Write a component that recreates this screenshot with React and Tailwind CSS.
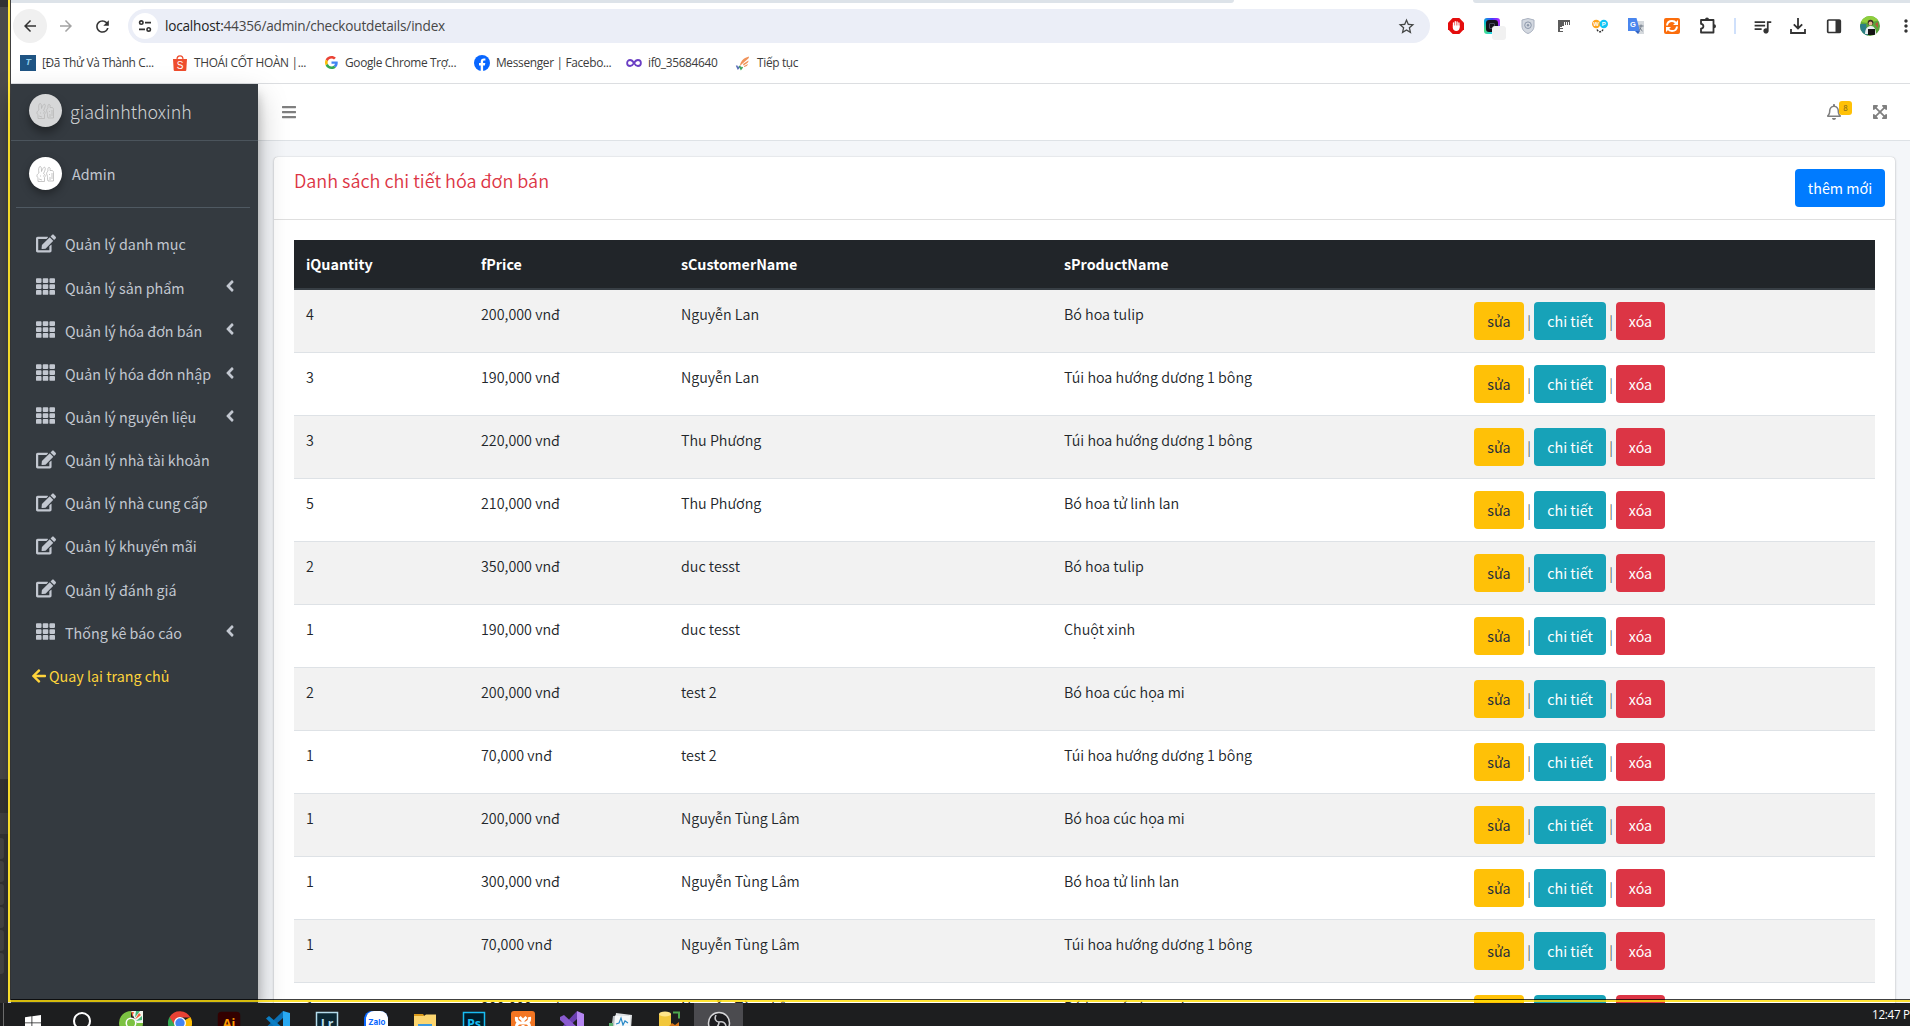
import {
  FaTh, FaAngleLeft, FaArrowLeft, FaBars, FaRegBell, FaExpandArrowsAlt, FaEdit,
} from 'react-icons/fa';
import {
  MdArrowBack, MdArrowForward, MdRefresh, MdStarBorder, MdQueueMusic, MdMoreVert,
} from 'react-icons/md';

const bookmarks = [
  { w: 'w-[152px]', label: '[Đã Thử Và Thành C...', icon: 'T' },
  { w: 'w-[151px]', label: 'THOÁI CỐT HOÀN |...', icon: 'S' },
  { w: 'w-[151px]', label: 'Google Chrome Trợ...', icon: 'G' },
  { w: 'w-[152px]', label: 'Messenger | Facebo...', icon: 'F' },
  { w: 'w-[109px]', label: 'if0_35684640', icon: 'I' },
  { w: 'w-[90px]', label: 'Tiếp tục', icon: 'W' },
];

const menu = [
  ['Quản lý danh mục', false],
  ['Quản lý sản phẩm', true],
  ['Quản lý hóa đơn bán', true],
  ['Quản lý hóa đơn nhập', true],
  ['Quản lý nguyên liệu', true],
  ['Quản lý nhà tài khoản', false],
  ['Quản lý nhà cung cấp', false],
  ['Quản lý khuyến mãi', false],
  ['Quản lý đánh giá', false],
  ['Thống kê báo cáo', true],
];

const rows = [
  ['4', '200,000 vnđ', 'Nguyễn Lan', 'Bó hoa tulip'],
  ['3', '190,000 vnđ', 'Nguyễn Lan', 'Túi hoa hướng dương 1 bông'],
  ['3', '220,000 vnđ', 'Thu Phương', 'Túi hoa hướng dương 1 bông'],
  ['5', '210,000 vnđ', 'Thu Phương', 'Bó hoa tử linh lan'],
  ['2', '350,000 vnđ', 'duc tesst', 'Bó hoa tulip'],
  ['1', '190,000 vnđ', 'duc tesst', 'Chuột xinh'],
  ['2', '200,000 vnđ', 'test 2', 'Bó hoa cúc họa mi'],
  ['1', '70,000 vnđ', 'test 2', 'Túi hoa hướng dương 1 bông'],
  ['1', '200,000 vnđ', 'Nguyễn Tùng Lâm', 'Bó hoa cúc họa mi'],
  ['1', '300,000 vnđ', 'Nguyễn Tùng Lâm', 'Bó hoa tử linh lan'],
  ['1', '70,000 vnđ', 'Nguyễn Tùng Lâm', 'Túi hoa hướng dương 1 bông'],
  ['1', '200,000 vnđ', 'Nguyễn Tùng Lâm', 'Bó hoa cúc họa mi'],
];

function GoogleG() {
  return (
    <svg viewBox="0 0 48 48" className="ml-[2px] mr-[1px] size-[13px]">
      <path fill="#EA4335" d="M24 9.5c3.5 0 6.7 1.2 9.2 3.6l6.9-6.9C35.9 2.4 30.5 0 24 0 14.6 0 6.5 5.4 2.6 13.2l8 6.2C12.4 13.7 17.7 9.5 24 9.5z" />
      <path fill="#4285F4" d="M47 24.6c0-1.6-.2-3.1-.4-4.6H24v9h12.9c-.6 3-2.3 5.5-4.8 7.2l7.7 6C44.4 38 47 32 47 24.6z" />
      <path fill="#FBBC05" d="M10.500 28.600c-.5-1.500-.8-3-.8-4.600s.3-3.100.8-4.600l-8-6.200C.9 16.500 0 20.100 0 24s.9 7.500 2.600 10.800z" />
      <path fill="#34A853" d="M24 48c6.500 0 11.900-2.100 15.900-5.800l-7.700-6c-2.200 1.500-4.900 2.300-8.200 2.300-6.300 0-11.600-4.200-13.500-9.900l-8 6.200C6.500 42.600 14.600 48 24 48z" />
    </svg>
  );
}

function BookmarkIcon({ kind }) {
  if (kind === 'T')
    return (
      <span className="flex size-4 items-center justify-center bg-[#1f5483] font-['Liberation_Sans'] text-[9px] font-bold italic text-[#8fd0ee]">T</span>
    );
  if (kind === 'S')
    return (
      <svg viewBox="0 0 16 16" className="size-4">
        <path d="M5 4.500a3 3.600 0 0 1 6 0" fill="none" stroke="#ee4d2d" strokeWidth="1.200" />
        <path d="M1 4h14l-.7 11a1 1 0 0 1-1 1H2.700a1 1 0 0 1-1-1z" fill="#ee4d2d" />
        <text x="8" y="13.500" textAnchor="middle" fontSize="10" fontFamily="Liberation Sans" fill="#fff">S</text>
      </svg>
    );
  if (kind === 'G') return <GoogleG />;
  if (kind === 'F')
    return (
      <svg viewBox="0 0 16 16" className="size-4">
        <circle cx="8" cy="8" r="8" fill="#0866ff" />
        <path d="M6.700 16v-5.500H5V8.100h1.700V7c0-2.500 1.100-3.600 3.300-3.600.5 0 1 .1 1.400.2v2c-.3 0-.6-.1-1-.1-1 0-1.300.5-1.300 1.400v1.200h2.200l-.4 2.400H9.100V16z" fill="#fff" />
      </svg>
    );
  if (kind === 'I')
    return (
      <svg viewBox="0 0 16 16" className="size-4">
        <path d="M8 8C6.700 5.800 5.600 5 4.100 5a3 3 0 0 0 0 6C5.600 11 6.700 10.200 8 8s2.400-3 3.900-3a3 3 0 0 1 0 6C10.400 11 9.300 10.200 8 8z" fill="none" stroke="#6b3fc4" strokeWidth="1.800" />
      </svg>
    );
  return (
    <svg viewBox="0 0 16 16" className="size-4">
      <path d="M5 11C5 7 8 3 14 1.500c0 1.500-.7 2.300-1.500 2.700L7 9zM8 9l5.500-3.500c0 1.500-.7 2.300-1.500 2.700L8.500 10.500zM9 11l4-2c-.3 1.500-1.500 2.500-4 3z" fill="#f0935a" />
      <path d="M1.500 10.500l1.500 3 2-2.500" fill="none" stroke="#5b6fb8" strokeWidth="1.600" />
      <path d="M4.500 11l1.500 3 1.500-2" fill="none" stroke="#3ea45b" strokeWidth="1.600" />
    </svg>
  );
}

function Slot({ children }) {
  return <span className="relative flex h-[34px] w-[36px] shrink-0 items-center justify-center">{children}</span>;
}

function Toolbar() {
  return (
    <div className="flex h-[46px] items-center pt-[6px] text-[#454746]">
      <span className="ml-[2px] flex size-[34px] shrink-0 items-center justify-center rounded-full bg-[#f0f0f0]">
        <MdArrowBack className="size-[18px] text-[#333]" />
      </span>
      <span className="flex w-[37px] shrink-0 justify-center"><MdArrowForward className="size-[18px] text-[#a3a3a3]" /></span>
      <span className="flex w-[37px] shrink-0 justify-center"><MdRefresh className="size-[19px] text-[#333]" /></span>
      <div className="ml-[7px] flex h-[34px] w-[1302px] shrink-0 items-center rounded-full bg-[#ebeef7] pl-[4px] pr-[14px]">
        <span className="flex size-[26px] items-center justify-center rounded-full bg-white">
          <svg viewBox="0 0 14 14" className="size-[14px]" fill="none" stroke="#333" strokeWidth="1.600">
            <circle cx="3.300" cy="3.600" r="1.700" /><path d="M7 3.600h6M1 10.400h6" /><circle cx="10.700" cy="10.400" r="1.700" />
          </svg>
        </span>
        <span className="ml-[7px] mt-px flex-1 font-['Open_Sans',sans-serif] text-[13.600px] tracking-[-0.200px] text-[#474747]">
          <span className="text-[#1f1f1f]">localhost:</span>44356/admin/checkoutdetails/index
        </span>
        <MdStarBorder className="size-[19px]" />
      </div>
      <div className="ml-[8px] flex shrink-0 items-center">
        <Slot>
          <svg viewBox="0 0 16 16" className="size-4">
            <path d="M4.700 0h6.600L16 4.700v6.600L11.300 16H4.700L0 11.300V4.700z" fill="#e40d0d" />
            <path d="M5.500 8V4.800M7.300 8V3.600M9.100 8V3.800M10.900 9V5" stroke="#fff" strokeWidth="1.300" strokeLinecap="round" />
            <path d="M4.800 7.500h6.800V9.500c0 2-1.200 3.500-3.300 3.500S4.800 11.500 4.800 9.500z" fill="#fff" />
          </svg>
        </Slot>
        <Slot>
          <span className="flex size-4 items-center justify-center rounded-[3px] bg-[conic-gradient(from_0deg,#4338ff,#c026ff,#2563eb,#22d3ee,#4ade80,#06b6d4,#4338ff)]">
            <span className="flex size-[12px] items-center justify-center rounded-[3px] bg-[#14121c]"><span className="size-[6px] rounded-[1px] border border-[#4a4a60]" /></span>
          </span>
          <span className="absolute left-[18px] top-[17px] size-[14px] rounded-[3px] bg-[#f1f1f1]" />
        </Slot>
        <Slot>
          <svg viewBox="0 0 16 16" className="size-4">
            <path d="M8 .5l6 1.500v6c0 4-3 6.500-6 7.500-3-1-6-3.500-6-7.500V2z" fill="#d3d8e0" stroke="#a9b1bf" />
            <circle cx="8" cy="7.200" r="3.300" fill="none" stroke="#8d98ab" /><circle cx="8" cy="7.200" r="1.200" fill="#8d98ab" />
          </svg>
        </Slot>
        <Slot>
          <svg viewBox="0 0 16 16" className="size-4">
            <path d="M2 2h12v5h-1V4h-1v3h-1V4h-1v3H9V4H8v4H6v1H4v1h3v1H4v2h3v1H2z" fill="#5c5c5c" />
          </svg>
        </Slot>
        <Slot>
          <svg viewBox="0 0 16 16" className="size-4">
            <circle cx="4.200" cy="6" r="4.200" fill="#ffa51e" /><circle cx="11.800" cy="6" r="4.200" fill="#11c5f5" />
            <path d="M5 11.500c1.500 3 4.500 3 6 0" fill="none" stroke="#333" strokeWidth="1.500" strokeDasharray="2 1" />
            <text x="4.200" y="8.300" textAnchor="middle" fontSize="6" fontWeight="bold" fontFamily="Liberation Sans" fill="#fff">W</text>
            <text x="11.800" y="8.300" textAnchor="middle" fontSize="6" fontWeight="bold" fontFamily="Liberation Sans" fill="#fff">P</text>
          </svg>
        </Slot>
        <Slot>
          <svg viewBox="0 0 16 16" className="size-4">
            <path d="M7 3h9v13H10z" fill="#d5d9dd" />
            <path d="M0 0h8.500L12 13H0z" fill="#4a86ee" /><path d="M7 13h5l-2 3z" fill="#2f62c5" />
            <path d="M10.500 8h5M13 6.500V8c0 2-1 4-2.500 5M11.500 9.500c.8 1.500 1.700 2.600 3 3.500" stroke="#717b88" fill="none" />
            <text x="4.800" y="9" textAnchor="middle" fontSize="7.500" fontWeight="bold" fontFamily="Liberation Sans" fill="#fff">G</text>
          </svg>
        </Slot>
        <Slot>
          <svg viewBox="0 0 16 16" className="size-4">
            <rect width="16" height="16" rx="2" fill="#fb6d0c" />
            <path d="M3 7.500C3.300 4.500 5.500 3 8 3c1.800 0 3.200.8 4 2M13 8.500c-.3 3-2.500 4.500-5 4.500-1.800 0-3.200-.8-4-2" fill="none" stroke="#fff" strokeWidth="2" />
            <path d="M14 2v5H9zM2 14V9h5z" fill="#fff" />
          </svg>
        </Slot>
        <Slot>
          <svg viewBox="0 0 18 18" className="size-[18px]">
            <path d="M2 3h12.500v12.500H2v-3.800c3.200-.3 3.200-4.600 0-4.900z" fill="none" stroke="#333" strokeWidth="1.800" strokeLinejoin="round" />
            <path d="M6 2.500a2 2 0 0 1 4 0zM15 7.200a2 2 0 0 1 0 4z" fill="#333" />
          </svg>
        </Slot>
        <span className="mx-[8px] h-4 w-[2px] bg-[#cfe0fb]" />
        <Slot><MdQueueMusic className="size-[21px] text-[#333]" /></Slot>
        <Slot>
          <svg viewBox="0 0 16 16" className="size-4" fill="none" stroke="#333" strokeWidth="1.800"><path d="M8 0v10M3.800 6.300L8 10.500l4.200-4.200M1 11v4h14v-4" /></svg>
        </Slot>
        <Slot>
          <svg viewBox="0 0 16 16" className="size-4"><rect x="1.700" y="2" width="12.600" height="12.500" rx="1" fill="none" stroke="#333" strokeWidth="1.700" /><path d="M9.500 2H14v12.500H9.500z" fill="#333" /></svg>
        </Slot>
        <Slot>
          <svg viewBox="0 0 20 20" className="size-5">
            <clipPath id="av"><circle cx="10" cy="10" r="10" /></clipPath>
            <g clipPath="url(#av)">
              <rect width="20" height="20" fill="#5aa53a" /><path d="M0 0h20v4L8 7 0 6z" fill="#8fcf3c" /><path d="M0 8h6l2 12H0z" fill="#2b7f86" />
              <circle cx="10.500" cy="6.500" r="2.800" fill="#3a2a22" /><circle cx="10.500" cy="7.500" r="1.900" fill="#e6b58e" /><path d="M5 18c0-6 3-8 6-8s5 3 5 8z" fill="#e8edf0" /><path d="M8 13h7v6H8z" fill="#141414" /><path d="M15 8l3-2v6z" fill="#b35a3a" />
            </g>
          </svg>
        </Slot>
        <Slot><MdMoreVert className="size-[20px] text-[#333]" /></Slot>
      </div>
    </div>
  );
}

function Bunnies({ bg }) {
  return (
    <svg viewBox="0 0 33 33" className={bg}>
      <g fill="none" stroke="#b9b9b9" strokeWidth=".8">
        <path d="M10 16c-1-4 0-7 1.500-6.500 1 .5 1 3 1 5 1-3 2.500-5 3.500-4s-.5 4-1.500 6c2 1 2 3 1 4v4H9v-4c-2-1-1-3.500 1-4.500zM11 19h1M14 19h1M10 22l3 1" />
        <path d="M19 14c-.5-3 .5-4 1.500-3.500s.5 2 .5 3h2c1 0 1.500 1 1.500 2v8.500H19c-1-3 0-4-1-6s0-3 1-4zM20 17l1 1M21 20v3M23 16v6" />
      </g>
    </svg>
  );
}

function Sidebar() {
  return (
    <aside className="relative z-10 flex h-full w-[247px] shrink-0 flex-col bg-[#343a40] text-[14.300px] text-[#c2c7d0] shadow-[0_14px_28px_rgba(0,0,0,0.25),0_10px_10px_rgba(0,0,0,0.22)]">
      <div className="flex h-[57px] items-start border-b border-[#4b545c] pl-[18px] pt-[10px]">
        <Bunnies bg="size-[33px] shrink-0 rounded-full bg-[#d6d7d8] shadow-[0_6px_10px_rgba(0,0,0,0.35)]" />
        <span className="ml-[8px] mt-[2px] text-[17.900px] font-light leading-[30px] text-[#d0d2d4]">giadinhthoxinh</span>
      </div>
      <div className="ml-[5px] mr-[8px] flex h-[67px] items-start border-b border-[#4f5962] pl-[13px] pt-[16px]">
        <Bunnies bg="size-[33px] shrink-0 rounded-full bg-white shadow-[0_4px_8px_rgba(0,0,0,0.35)]" />
        <span className="ml-[10px] mt-[5px] leading-6">Admin</span>
      </div>
      <nav className="flex flex-col pt-[14px]">
        {menu.map(([label, group]) => (
          <div key={label} className="flex h-[43.170px] items-center pl-[25px]">
            {group ? <FaTh className="-mt-px size-[19px]" /> : <FaEdit className="h-[19px] w-[20px]" />}
            <span className={group ? 'ml-[10px] mt-px flex-1' : 'ml-[9px] mt-px flex-1'}>{label}</span>
            {group && <FaAngleLeft className="-mt-px mr-[19px] size-[18px]" />}
          </div>
        ))}
        <div className="flex h-[45px] items-center pl-[20px] text-[#ffd43b]">
          <FaArrowLeft className="size-[16px]" />
          <span className="ml-[2px]">Quay lại trang chủ</span>
        </div>
      </nav>
    </aside>
  );
}

const grid = 'grid grid-cols-[175px_200px_383px_411px_412px]';

function OrderTable() {
  return (
    <div className="mx-[20px] mt-[20px] text-[14.300px] leading-6 text-[#212529]">
      <div className={`${grid} h-[50px] border-b-2 border-[#383f45] bg-[#212529] pt-[12px] font-bold text-white`}>
        {['iQuantity', 'fPrice', 'sCustomerName', 'sProductName'].map((h) => (
          <span key={h} className="pl-3">{h}</span>
        ))}
      </div>
      {rows.map((r, i) => (
        <div key={i} className={`${grid} h-[63px] border-b border-[#dee2e6] pt-3 ${i % 2 ? 'bg-white' : 'bg-[#f2f2f2]'}`}>
          {r.map((c, j) => (
            <span key={j} className="pl-3 font-[350]">{c}</span>
          ))}
          <div className="flex h-[38px] items-center pl-[11px]">
            <span className="flex h-[38px] w-[50px] items-center justify-center rounded bg-[#ffc107] text-[#1f2d3d]">sửa</span>
            <span className="w-[10px] text-center font-light">|</span>
            <span className="flex h-[38px] w-[72px] items-center justify-center rounded bg-[#17a2b8] text-white">chi tiết</span>
            <span className="w-[10px] text-center font-light">|</span>
            <span className="flex h-[38px] w-[49px] items-center justify-center rounded bg-[#dc3545] text-white">xóa</span>
          </div>
        </div>
      ))}
    </div>
  );
}

function SquareApp({ bg, fg, line, label }) {
  return (
    <svg viewBox="0 0 24 24" className="size-6">
      <rect x="1.500" y="1.500" width="21" height="21" rx={line ? 0 : 3} fill={bg} stroke={line || bg} strokeWidth="1.500" />
      <text x="12" y="16.500" textAnchor="middle" fontSize="12.500" fontWeight="bold" fontFamily="Open Sans" fill={fg}>{label}</text>
    </svg>
  );
}

function Taskbar() {
  const icons = [
    <svg key="win" viewBox="0 0 24 24" className="size-6"><path d="M4 6.200l6.500-.9v6.200H4zM11.300 5.200L20 4v7.500h-8.700zM4 12.300h6.500v6.200L4 17.600zM11.300 12.300H20V20l-8.700-1.300z" fill="#fff" /></svg>,
    <svg key="o" viewBox="0 0 24 24" className="size-6"><circle cx="12" cy="10" r="8" fill="none" stroke="#fff" strokeWidth="2" /></svg>,
    <svg key="cc" viewBox="0 0 24 24" className="size-6">
      <path d="M12 0h12v12l-6 1z" fill="#f3f6ee" /><path d="M12 0A12 12 0 1 0 24 12l-7 0a5 5 0 1 1-5-5z" fill="#7cc242" />
      <circle cx="12" cy="12" r="5.500" fill="#fff" /><circle cx="12" cy="12" r="4" fill="#7cc242" />
      <path d="M12.500 1h2.500l-1.800 5zM20 2l2 2-6 4.500z" fill="#f06338" /><path d="M17 0h4l-5 6.500zM23 5v4l-6 1z" fill="#49b57a" />
    </svg>,
    <svg key="chrome" viewBox="0 0 24 24" className="size-6">
      <path d="M12 12L22.400 6A12 12 0 0 1 12 24z" fill="#fbbc05" /><path d="M12 12v12A12 12 0 0 1 1.600 6z" fill="#34a853" />
      <path d="M12 6.500h10.500A12 12 0 0 0 1.600 6l5 8z" fill="#e94235" /><circle cx="12" cy="12" r="6" fill="#fff" /><circle cx="12" cy="12" r="4.700" fill="#4285f4" />
    </svg>,
    <SquareApp key="ai" bg="#330000" fg="#ff9a00" label="Ai" />,
    <svg key="code" viewBox="0 0 24 24" className="size-6"><path d="M17 0v7L3.500 19 0 16.500z" fill="#0b6fb3" /><path d="M3 5L0 7.500 17 24v-7z" fill="#0b7ec4" /><path d="M17 0l7 2v20l-7 2z" fill="#29a9f2" /></svg>,
    <SquareApp key="lr" bg="#0b2733" fg="#b4dcec" line="#b4dcec" label="Lr" />,
    <svg key="zalo" viewBox="0 0 24 24" className="size-6"><rect width="24" height="24" rx="8" fill="#0a68ff" /><rect x="2" width="22" height="24" rx="8" fill="#fff" /><text x="12.800" y="14" textAnchor="middle" fontSize="8" fontWeight="bold" fontFamily="Inter" fill="#0a68ff">Zalo</text></svg>,
    <svg key="folder" viewBox="0 0 24 24" className="size-6"><path d="M1 3h9l1.500 2H1z" fill="#d99a1c" /><path d="M1 5h10l2-1.500h10V22H1z" fill="#fcd670" /><path d="M5 13h14v9H5z" fill="#3b9ae1" /></svg>,
    <SquareApp key="ps" bg="#001d2b" fg="#19bdf2" line="#19bdf2" label="Ps" />,
    <svg key="xampp" viewBox="0 0 24 24" className="size-6"><rect width="24" height="24" rx="3" fill="#f37623" /><path d="M5.500 20v-4c0-2.500 1-4 3-4h7c2 0 3 1.500 3 4v4M9 12C5.500 11 5 9 5.500 6M15 12c3.500-1 4-3 3.500-6M8.500 6l3.500 3.500L15.500 6M12 14v4" fill="none" stroke="#fff" strokeWidth="3" /></svg>,
    <svg key="vs" viewBox="0 0 24 24" className="size-6"><path d="M17 0v8L4 20l-4-2z" fill="#6a3fb0" /><path d="M4 4L0 6v3l17 15v-8z" fill="#8a5bd0" /><path d="M17 0l7 3v18l-7 3z" fill="#b587f2" /></svg>,
    <svg key="mon" viewBox="0 0 24 24" className="size-6"><path d="M7 2l16 2-1 14H5z" fill="#dfe2e4" /><path d="M4 5l16-1v15H2z" fill="#b9bec2" /><path d="M6 4.500h15V18H5z" fill="#f6f8f9" /><path d="M7 13l3-1 2-5 2 7 2-4 3 2" fill="none" stroke="#2788c8" strokeWidth="1.200" /><path d="M0 12h4v8H0z" fill="#5bb06e" /></svg>,
    <svg key="db" viewBox="0 0 24 24" className="size-6"><path d="M1 3v18h12V3z" fill="#f2c73b" /><ellipse cx="7" cy="3" rx="6" ry="2.500" fill="#ffe58a" /><path d="M15 1.500h6v6" fill="none" stroke="#4ea64e" strokeWidth="2" /><path d="M8 18l6-6 3 2 4-3v6l-5 3z" fill="#d67418" /></svg>,
    <svg key="obs" viewBox="0 0 24 24" className="size-6"><circle cx="12" cy="12" r="10.500" fill="#1c1c1f" stroke="#d6d6d8" strokeWidth="1.500" /><path d="M9 4c-2 4 0 7 3 7 4-1 7 1 7 5M12 11c0 4-3 7-7 6" fill="none" stroke="#c9c9cc" strokeWidth="1.600" /></svg>,
  ];
  return (
    <footer className="flex h-[23px] shrink-0 overflow-hidden bg-[#1d1e1f]">
      <span className="ml-[3px] h-full w-px shrink-0 bg-[#6b6b6b]" />
      <div className="ml-[4px] flex">
        {icons.map((icon, i) => (
          <span key={i} className={`flex h-[40px] w-[49px] shrink-0 justify-center pt-[8px] ${i === 14 ? 'bg-[#4b4b4f]' : ''}`}>{icon}</span>
        ))}
      </div>
      <span className="ml-auto w-[38px] shrink-0 whitespace-nowrap font-['Open_Sans',sans-serif] text-[11.700px] leading-[22px] tracking-[-0.300px] text-white">12:47 PM</span>
    </footer>
  );
}

export default function App() {
  return (
    <div className="relative flex h-[1026px] w-[1910px] flex-col overflow-hidden bg-white font-['Noto_Sans_CJK_SC',sans-serif]">
      <div className="flex h-[1003px] shrink-0 overflow-hidden">
        <div className="flex w-[8px] shrink-0 flex-col bg-[#363636]">
          <span className="h-[7px] bg-[#333]" />
          <span className="h-[772px] bg-[#4a4a4a]" />
          <span className="mt-[34px] h-[21px] bg-[#434343]" />
          <span className="mt-[4px] flex flex-col gap-[2px]">
            {[0, 1, 2, 3, 4, 5].map((k) => <span key={k} className="h-[21px] w-[4px] rounded-r-[3px] bg-[#474747]" />)}
          </span>
        </div>
        <div className="flex w-[1902px] flex-col pl-[3px]">
          <header className="h-[84px] shrink-0 border-b border-[#dcdee1] bg-white">
            <div className="flex h-[3px] justify-between">
              <span className="w-[1223px] rounded-br-[3px] bg-[#dde3e9]" />
              <span className="w-[437px] rounded-bl-[3px] bg-[#dde3e9]" />
            </div>
            <div className="-mt-[3px]"><Toolbar /></div>
            <div className="flex h-[34px] items-center pl-[9px] font-['Open_Sans',sans-serif] text-[11.900px] tracking-[-0.330px] text-[#3c3c3c]">
              {bookmarks.map((b) => (
                <span key={b.label} className={`flex shrink-0 items-center gap-[6px] whitespace-nowrap ${b.w}`}>
                  <BookmarkIcon kind={b.icon} />{b.label}
                </span>
              ))}
            </div>
          </header>
          <div className="flex h-[919px] shrink-0">
            <Sidebar />
            <main className="flex flex-1 flex-col bg-[#f4f6f9]">
              <div className="flex h-[57px] shrink-0 items-center border-b border-[#dee2e6] bg-white pl-[23px] pr-[22px] text-[#7f7f7f]">
                <FaBars className="size-4" />
                <span className="relative ml-auto mr-[30px]">
                  <FaRegBell className="size-4" />
                  <span className="absolute left-[13px] top-[-3px] flex h-[14px] w-[13px] items-center justify-center rounded-[3px] bg-[#ffc107] text-[8px] text-[#7a6420]">8</span>
                </span>
                <FaExpandArrowsAlt className="size-4" />
              </div>
              <section className="ml-[16px] mt-[16px] h-[900px] w-[1621px] rounded-[4px] bg-white shadow-[0_0_1px_rgba(0,0,0,0.25),0_1px_3px_rgba(0,0,0,0.2)]">
                <div className="flex h-[63px] items-start justify-between border-b border-[#dfdfdf] pl-5 pr-[10px] pt-[12px]">
                  <h3 className="-mt-px text-[18px] font-[350] leading-[24px] text-[#dc3545]">Danh sách chi tiết hóa đơn bán</h3>
                  <span className="flex h-[38px] w-[90px] items-center justify-center rounded bg-[#007bff] text-[14.300px] text-white">thêm mới</span>
                </div>
                <OrderTable />
              </section>
            </main>
          </div>
        </div>
      </div>
      <Taskbar />
      <div className="pointer-events-none absolute left-[8px] top-0 z-20 h-[1002px] w-[1902px] border-b-2 border-l-2 border-[rgba(255,221,0,0.8)]">
        <div className="h-full w-full border-b border-l border-[rgba(0,0,0,0.75)]" />
      </div>
    </div>
  );
}
